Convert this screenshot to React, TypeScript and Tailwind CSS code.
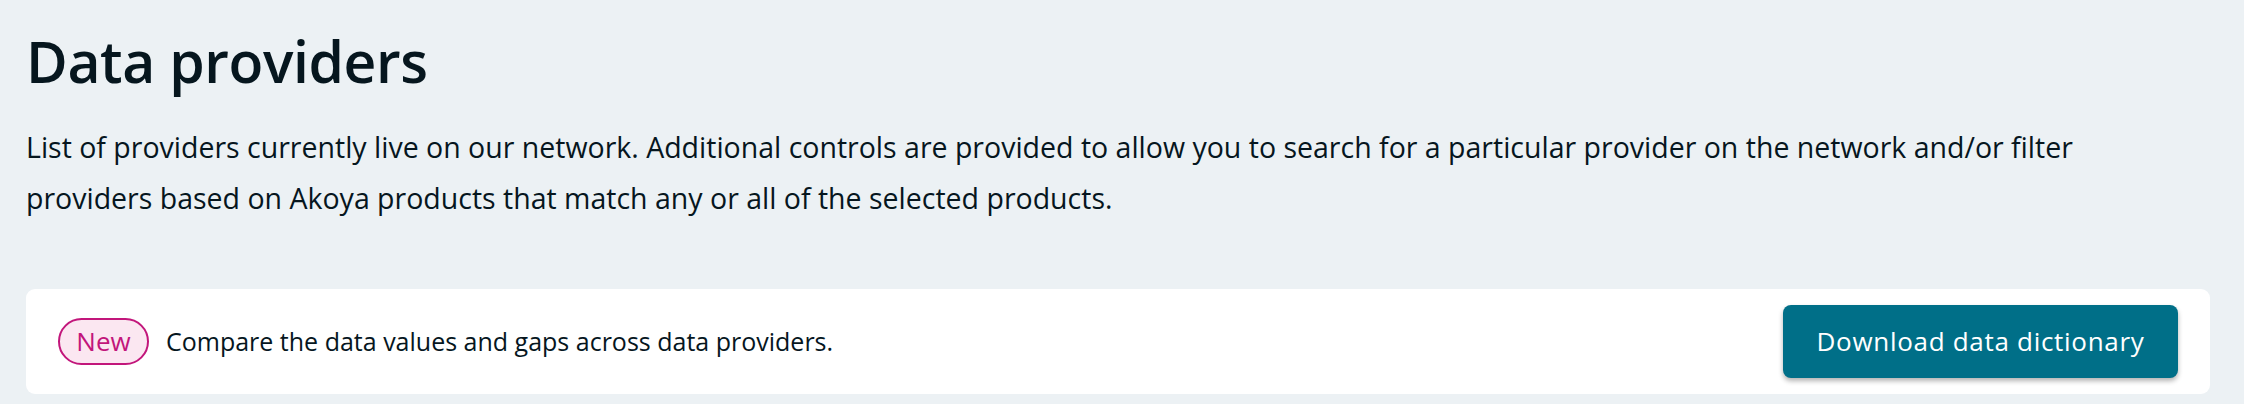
import React from 'react';

export default function App() {
  return (
    <div className="min-h-[404px] bg-[#ecf1f4] pl-[26px] pr-[34px] pt-[27px] font-['Open_Sans',sans-serif] text-[#06161e]">
      <h1 className="text-[57px] leading-[68px] font-semibold tracking-[-0.4px]">Data providers</h1>
      <p className="mt-[27px] pr-3 text-[28.5px] leading-[51px]">
        List of providers currently live on our network. Additional controls are provided to allow you to search for a
        particular provider on the network and/or filter providers based on Akoya products that match any or all of the
        selected products.
      </p>

      <div className="mt-[65px] flex items-center justify-between rounded-[9px] bg-white py-4 pl-8 pr-8">
        <div className="flex items-center gap-[17px]">
          <span className="flex h-[47px] w-[91px] items-center justify-center rounded-full border-2 border-[#c2167b] bg-[#fbe7f1] text-[26px] text-[#c2167b]">
            New
          </span>
          <span className="text-[25px]">Compare the data values and gaps across data providers.</span>
        </div>
        <button className="flex h-[73px] w-[395px] items-center justify-center rounded-[8px] bg-[#006f88] text-[26px] font-medium tracking-[0.7px] text-white shadow-[0_3px_5px_rgba(0,0,0,0.3)]">
          Download data dictionary
        </button>
      </div>
    </div>
  );
}
